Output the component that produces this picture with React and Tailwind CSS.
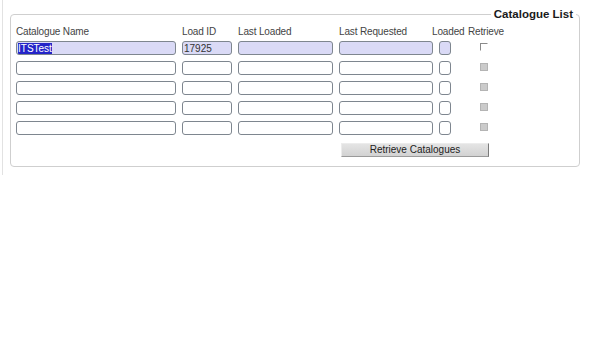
import React from "react";

const rows = [0, 1, 2, 3, 4];

function Box({ w, filled, children }) {
  return (
    <div
      className={`h-[14px] shrink-0 rounded-[3px] border border-[#7e868f] ${w} ${
        filled ? "bg-[#dadaf6]" : "bg-white"
      } flex items-center overflow-hidden pl-px text-[10px] leading-[11px] text-[#333]`}
    >
      {children}
    </div>
  );
}

export default function App() {
  return (
    <div
      className="flex items-start bg-white w-[600px] h-[345px]"
      style={{ fontFamily: '"Liberation Sans", Arial, sans-serif' }}
    >
      <div className="ml-[2px] w-px h-[175px] bg-[#e2e2e2] shrink-0" />
      <fieldset className="ml-[7px] mt-[7px] w-[570px] rounded-[4px] border border-[#cfcfcf] px-[5px] pt-[5px] pb-[9px]">
        <legend
          align="right"
          className="ml-auto mr-[-2px] px-[3px] text-[11.5px] leading-[14px] font-bold text-[#1a1a1a]"
        >
          Catalogue List
        </legend>
        <div className="flex h-[12px] text-[10px] leading-[12px] tracking-[-0.15px] text-[#444] whitespace-nowrap">
          <span className="w-[166px] shrink-0">Catalogue Name</span>
          <span className="w-[56px] shrink-0">Load ID</span>
          <span className="w-[101px] shrink-0">Last Loaded</span>
          <span className="w-[93px] shrink-0">Last Requested</span>
          <span className="w-[36px] shrink-0">Loaded</span>
          <span className="shrink-0">Retrieve</span>
        </div>
        <div className="mt-[3px] flex flex-col gap-[6px]">
          {rows.map((i) => (
            <div key={i} className="flex items-start">
              <Box w="w-[160px]" filled={i === 0}>
                {i === 0 && (
                  <span className="bg-[#2424c8] text-white leading-[11px]">ITSTest</span>
                )}
              </Box>
              <div className="w-[6px] shrink-0" />
              <Box w="w-[50px]" filled={i === 0}>
                {i === 0 && <span>17925</span>}
              </Box>
              <div className="w-[6px] shrink-0" />
              <Box w="w-[95px]" filled={i === 0} />
              <div className="w-[6px] shrink-0" />
              <Box w="w-[94px]" filled={i === 0} />
              <div className="w-[6px] shrink-0" />
              <Box w="w-[12px]" filled={i === 0} />
              <div className="w-[29px] shrink-0" />
              {i === 0 ? (
                <div className="mt-[2px] w-[8px] h-[8px] border-t border-l border-[#8a8a8a] border-b border-r border-b-white border-r-white bg-white shrink-0" />
              ) : (
                <div className="mt-[2px] w-[8px] h-[8px] border border-[#b4b4b4] bg-[#cbcbcb] shrink-0" />
              )}
            </div>
          ))}
        </div>
        <div className="mt-[8px] flex">
          <button className="ml-[325px] w-[148px] h-[14px] border border-t-[#ececec] border-l-[#ececec] border-b-[#9a9a9a] border-r-[#7a7a7a] bg-gradient-to-b from-[#e4e4e4] to-[#d2d2d2] text-[10px] leading-[12px] text-[#222] flex items-center justify-center">
            Retrieve Catalogues
          </button>
        </div>
      </fieldset>
    </div>
  );
}
